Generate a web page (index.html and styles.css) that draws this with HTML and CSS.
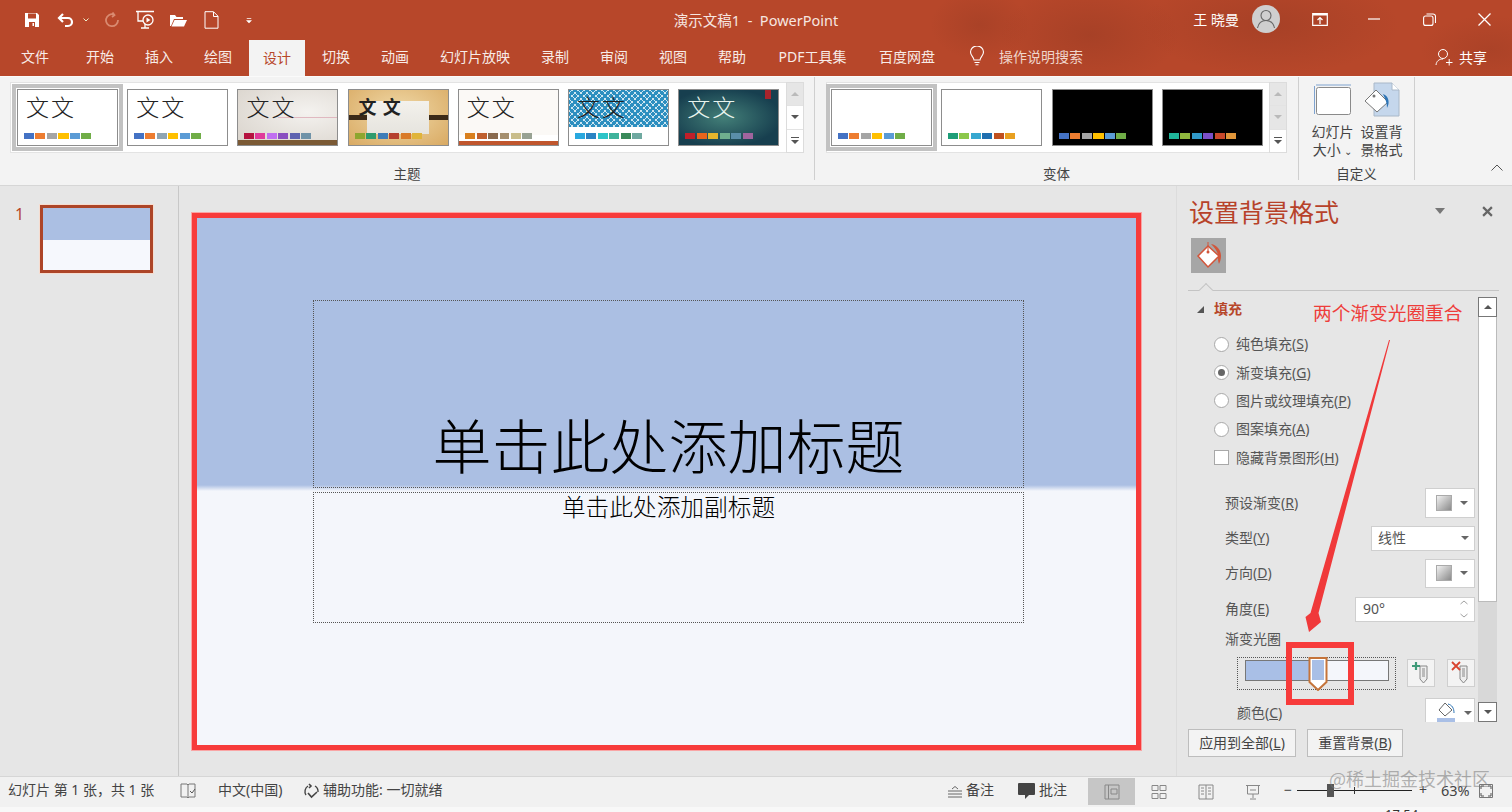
FILE: index.html
```html
<!DOCTYPE html>
<html lang="zh-CN">
<head>
  <meta charset="UTF-8">
  <title>演示文稿1 - PowerPoint</title>
  <link rel="stylesheet" href="styles.css">
</head>
<body>
  <div class="chrome">
    <div class="titlebar">
      <div class="qat">
        <svg class="qi save" viewBox="0 0 16 16"><path d="M1 1h12l2 2v12H1z" fill="#fff"/><path d="M4 1.500h8v5H4zM5 10h6v5H5z" fill="#b7472a"/><path d="M8.500 11h1.500v3H8.500z" fill="#fff"/></svg>
        <svg class="qi undo" viewBox="0 0 18 16"><path d="M6 2 2 6l4 4M2.500 6H11a4 4 0 0 1 0 8H8" fill="none" stroke="#fff" stroke-width="2.200"/></svg>
        <svg class="qi caret" viewBox="0 0 6 4"><path d="M.5.500 3 3 5.500.500" fill="none" stroke="#eec" stroke-width="1"/></svg>
        <svg class="qi redo" viewBox="0 0 16 16"><path d="M10 2.500A6 6 0 1 0 14 8M8.500 .5l2 2.500-2.500 2" fill="none" stroke="#d98a70" stroke-width="1.800"/></svg>
        <svg class="qi show" viewBox="0 0 20 20"><path d="M1 1.500h18M3 2v9h7M6 18h8M10 14v4" fill="none" stroke="#fff" stroke-width="1.300"/><circle cx="13" cy="10" r="5" fill="#b7472a" stroke="#fff" stroke-width="1.300"/><path d="M11.500 7.500 15.500 10l-4 2.500z" fill="#fff"/></svg>
        <svg class="qi open" viewBox="0 0 18 16"><path d="M1 14V3h5l1.500 2H14v2H5L2 14z" fill="#fff"/><path d="M5.500 8H18l-3 6.500H2.500z" fill="#fff"/></svg>
        <svg class="qi new" viewBox="0 0 15 18"><path d="M1 .7h8.500L14 5.200v12H1zM9.500 1v4.500H14" fill="none" stroke="#fff" stroke-width="1"/></svg>
        <svg class="qi more" viewBox="0 0 8 8"><path d="M1 .5h6v1H1zM0 3.500h8L4 7.500z" fill="#fff"/></svg>
      </div>
      <div class="doc-title">演示文稿1&nbsp; - &nbsp;PowerPoint</div>
      <div class="win">
        <span class="user">王 晓曼</span>
        <span class="avatar">
          <svg viewBox="0 0 28 28" width="28" height="28"><circle cx="14" cy="10.500" r="5" fill="none" stroke="#666" stroke-width="1.100"/><path d="M5.500 23c1-5 4-7.500 8.500-7.500s7.500 2.500 8.500 7.500" fill="none" stroke="#666" stroke-width="1.100"/></svg>
        </span>
        <svg class="wi disp" viewBox="0 0 16 13"><path d="M.7.700h14.600v11.600H.7z" fill="none" stroke="#fff" stroke-width="1.200"/><path d="M1 1.500h14" stroke="#fff" stroke-width="2"/><path d="M8 11V5M5.500 7 8 4.500 10.500 7" fill="none" stroke="#fff" stroke-width="1.200"/></svg>
        <svg class="wi min" viewBox="0 0 12 2"><path d="M0 1h12" stroke="#fff" stroke-width="1.200"/></svg>
        <svg class="wi rest" viewBox="0 0 13 13"><rect x=".6" y="3" width="9.400" height="9.400" rx="2" fill="none" stroke="#fff" stroke-width="1.100"/><path d="M3.500 1h6.500a2.500 2.500 0 0 1 2.500 2.500V10" fill="none" stroke="#fff" stroke-width="1.100"/></svg>
        <svg class="wi close" viewBox="0 0 13 13"><path d="M.5.500l12 12M12.500.500l-12 12" stroke="#fff" stroke-width="1.300"/></svg>
      </div>
    </div>
    <div class="tabs">
      <span class="tab tab-file">文件</span>
      <span class="tab">开始</span>
      <span class="tab">插入</span>
      <span class="tab">绘图</span>
      <span class="tab active">设计</span>
      <span class="tab">切换</span>
      <span class="tab">动画</span>
      <span class="tab">幻灯片放映</span>
      <span class="tab">录制</span>
      <span class="tab">审阅</span>
      <span class="tab">视图</span>
      <span class="tab">帮助</span>
      <span class="tab tab-pdf">PDF工具集</span>
      <span class="tab">百度网盘</span>
      <svg class="bulb" viewBox="0 0 16 20"><path d="M5 14c0-3-3.500-4-3.500-8a6.500 6 0 0 1 13 0c0 4-3.500 5-3.500 8zM5.500 16.500h5M6.500 18.800h3" fill="none" stroke="#fff" stroke-width="1.100"/></svg>
      <span class="search">操作说明搜索</span>
      <span class="share">
        <svg viewBox="0 0 18 18" width="18" height="18"><circle cx="8" cy="6" r="4.500" fill="none" stroke="#fff" stroke-width="1"/><path d="M1 17c.5-4 3-6 7-6M11 14.500h6.500M14.200 11v6.500" fill="none" stroke="#fff" stroke-width="1"/></svg>
        共享
      </span>
    </div>
  </div>

  <div class="ribbon">
    <section class="group group-themes">
      <div class="gallery">
        <div class="thumb selected"><b>文 文</b><i class="swatches pal-office"></i></div>
        <div class="thumb"><b>文 文</b><i class="swatches pal-2"></i></div>
        <div class="thumb th-wood"><b>文 文</b><i class="swatches pal-3"></i></div>
        <div class="thumb th-tan"><b class="bold">文 文</b><i class="swatches pal-4"></i></div>
        <div class="thumb th-strip"><b>文 文</b><i class="swatches pal-5"></i></div>
        <div class="thumb th-lattice"><b>文 文</b><i class="swatches pal-6"></i></div>
        <div class="thumb th-teal"><b>文 文</b><i class="swatches pal-7"></i></div>
        <div class="scroller">
          <span class="off"><em class="up"></em></span>
          <span><em class="down"></em></span>
          <span><em class="expand"></em></span>
        </div>
      </div>
      <div class="group-label">主题</div>
    </section>

    <section class="group group-variants">
      <div class="gallery">
        <div class="thumb selected"><i class="swatches pal-office"></i></div>
        <div class="thumb"><i class="swatches pal-8"></i></div>
        <div class="thumb th-black"><i class="swatches pal-office"></i></div>
        <div class="thumb th-black"><i class="swatches pal-9"></i></div>
        <div class="scroller">
          <span class="off"><em class="up"></em></span>
          <span class="off"><em class="down"></em></span>
          <span><em class="expand"></em></span>
        </div>
      </div>
      <div class="group-label">变体</div>
    </section>

    <section class="group group-custom">
      <div class="big-buttons">
        <div class="big">
          <svg viewBox="0 0 38 32" width="38" height="32"><rect x="2.500" y="3.500" width="34" height="27" rx="2" fill="#fff" stroke="#8a8a8a"/><path d="M2 1h35M.5 2v28" stroke="#7fa3cf" fill="none"/></svg>
          <span>幻灯片<br>大小 <small>⌄</small></span>
        </div>
        <div class="big">
          <svg viewBox="0 0 38 36" width="38" height="36"><path d="M11 1h18l7 7v26H11z" fill="#c5d7ec" stroke="#a9b8c8"/><path d="M29 1v7h7" fill="#fff" stroke="#a9b8c8"/><path d="M13 8 25 20 14 30 2 19z" fill="#fff" stroke="#777"/><path d="M20 12c6 2 7 9 4 14 0-4-1-8-4-14z" fill="#2e75b6"/><circle cx="11" cy="14" r="1.500" fill="#777"/></svg>
          <span>设置背<br>景格式</span>
        </div>
      </div>
      <div class="group-label">自定义</div>
    </section>
    <svg class="collapse" viewBox="0 0 12 7"><path d="M.5 6.500 6 1l5.500 5.500" fill="none" stroke="#555"/></svg>
  </div>

  <div class="main">
    <aside class="slides">
      <span class="num">1</span>
      <div class="mini"></div>
    </aside>

    <div class="canvas">
      <div class="slide">
        <div class="ph ph-title">单击此处添加标题</div>
        <div class="ph ph-sub">单击此处添加副标题</div>
      </div>
    </div>

    <aside class="pane">
      <div class="pane-head">
        <h2>设置背景格式</h2>
        <svg class="pane-menu" viewBox="0 0 10 6"><path d="M0 0h10L5 6z" fill="#777"/></svg>
        <svg class="pane-close" viewBox="0 0 10 10"><path d="M1 1l8 8M9 1 1 9" stroke="#666" stroke-width="2"/></svg>
      </div>
      <div class="pane-tile">
        <svg viewBox="0 0 30 30" width="30" height="30"><path d="M14 5 25 15 14 26 4 15z" fill="#fff" stroke="#d2553a" stroke-width="1.500"/><path d="M14 1v9" stroke="#d2553a"/><circle cx="14" cy="11" r="1.500" fill="#d2553a"/><path d="M17 3c6 1 10 6 10 12 0 3-1 6-2 8-1-2-1-5-1-8 0-4-3-8-7-12z" fill="#d2553a"/></svg>
      </div>
      <div class="pane-rule"></div>

      <div class="pane-body">
        <div class="form">
          <div class="section"><em></em>填充</div>
          <div class="options">
            <label class="opt"><i class="radio"></i>纯色填充(<u>S</u>)</label>
            <label class="opt"><i class="radio on"></i>渐变填充(<u>G</u>)</label>
            <label class="opt"><i class="radio"></i>图片或纹理填充(<u>P</u>)</label>
            <label class="opt"><i class="radio"></i>图案填充(<u>A</u>)</label>
            <label class="opt"><i class="check"></i>隐藏背景图形(<u>H</u>)</label>
          </div>
          <div class="row r-preset"><span>预设渐变(<u>R</u>)</span><div class="pick"><i class="grad"></i><em></em></div></div>
          <div class="row r-type"><span>类型(<u>Y</u>)</span><div class="select">线性<em></em></div></div>
          <div class="row r-dir"><span>方向(<u>D</u>)</span><div class="pick"><i class="grad"></i><em></em></div></div>
          <div class="row r-angle"><span>角度(<u>E</u>)</span>
            <div class="spin">90°
              <svg viewBox="0 0 8 18" width="8" height="18"><path d="M.5 4 4 1l3.500 3M.5 14 4 17l3.500-3" fill="none" stroke="#888" stroke-width=".8"/></svg>
            </div>
          </div>
          <div class="row r-stops"><span>渐变光圈</span></div>
          <div class="bar-row">
            <div class="stops">
              <div class="stops-bar"></div>
              <svg class="marker" viewBox="0 0 20 34" width="20" height="34"><path d="M1.500 1h17v24L10 33 1.500 25z" fill="#fff" stroke="#c5743a" stroke-width="2"/><path d="M4 3h12v20H4z" fill="#a9bfe6"/></svg>
            </div>
            <div class="stop-btn">
              <svg viewBox="0 0 20 24" width="20" height="24"><path d="M9 5h7v13l-3.500 4L9 18z" fill="#eee" stroke="#888"/><path d="M11 7h3v9h-3z" fill="#bbb"/><path d="M1 5h8M5 1v8" stroke="#3f9a78" stroke-width="2.200"/></svg>
            </div>
            <div class="stop-btn">
              <svg viewBox="0 0 20 24" width="20" height="24"><path d="M9 5h7v13l-3.500 4L9 18z" fill="#eee" stroke="#888"/><path d="M11 7h3v9h-3z" fill="#bbb"/><path d="M1 1l8 8M9 1 1 9" stroke="#d8432f" stroke-width="1.800"/></svg>
            </div>
          </div>
          <div class="row r-color"><span>颜色(<u>C</u>)</span>
            <div class="pick">
              <svg viewBox="0 0 20 24" width="20" height="24"><path d="M9 2 16 9l-7 6-6-6z" fill="#fff" stroke="#666"/><path d="M12 3c4 1 6 4 6 9" stroke="#2e75b6" fill="none"/><path d="M1 17h18v7H1z" fill="#a9bfe6"/></svg>
              <em></em>
            </div>
          </div>
        </div>
        <div class="vscroll">
          <span class="sb-btn"><em class="up"></em></span>
          <span class="sb-thumb"></span>
          <span class="sb-track"></span>
          <span class="sb-btn"><em class="down"></em></span>
        </div>
      </div>

      <div class="pane-foot">
        <button class="btn b-all">应用到全部(<u>L</u>)</button>
        <button class="btn b-reset">重置背景(<u>B</u>)</button>
      </div>
    </aside>
  </div>

  <footer class="status">
    <span class="st-count">幻灯片 第 1 张，共 1 张</span>
    <svg class="st-spell" viewBox="0 0 17 16" width="17" height="16"><path d="M1 1h6l1 1 1-1h6v13H9l-1 1-1-1H1zM8 2v12" fill="none" stroke="#777"/><path d="M10 8l2 2 3-4" fill="none" stroke="#555"/></svg>
    <span class="st-lang">中文(中国)</span>
    <svg class="st-acc" viewBox="0 0 17 17" width="17" height="17"><path d="M5 3A6.500 6.500 0 0 0 3 12M12 3a6.500 6.500 0 0 1 3 6" fill="none" stroke="#444" stroke-width="1.400"/><path d="M6 1l2 2-2 2M5 10l3.500 4L14 9" fill="none" stroke="#444" stroke-width="1.600"/></svg>
    <span class="st-acc-text">辅助功能: 一切就绪</span>

    <svg class="st-notes" viewBox="0 0 14 12" width="14" height="12"><path d="M0 5h14M0 8h14M0 11h14" stroke="#666"/><path d="M4 3 7 .5 10 3" fill="none" stroke="#666"/></svg>
    <span class="st-label">备注</span>
    <svg class="st-comment" viewBox="0 0 17 16" width="17" height="16"><path d="M1 0h15a1 1 0 0 1 1 1v10a1 1 0 0 1-1 1h-5l-4 4v-4H1a1 1 0 0 1-1-1V1a1 1 0 0 1 1-1z" fill="#444"/></svg>
    <span class="st-label">批注</span>

    <span class="view active">
      <svg viewBox="0 0 16 16" width="16" height="16"><path d="M1 1h14v14H1zM4.500 1v14M7 5h6v5H7z" fill="none" stroke="#888"/></svg>
    </span>
    <span class="view">
      <svg viewBox="0 0 16 16" width="16" height="16"><path d="M1 1.500h6v5H1zM9 1.500h6v5H9zM1 9.500h6v5H1zM9 9.500h6v5H9z" fill="none" stroke="#888"/></svg>
    </span>
    <span class="view">
      <svg viewBox="0 0 16 16" width="16" height="16"><path d="M1 1h14v14H1zM8 1v14M3 4h3M3 7h3M3 10h3M10 4h3M10 7h3M10 10h3" fill="none" stroke="#888"/></svg>
    </span>
    <span class="view">
      <svg viewBox="0 0 16 16" width="16" height="16"><path d="M1 1.500h14M2.500 2v8h11V2M8 10v4M5 15h6M5 6h6" fill="none" stroke="#888"/></svg>
    </span>

    <span class="zoom-minus">−</span>
    <span class="zoom-track"><i class="zoom-mid"></i><i class="zoom-thumb"></i></span>
    <span class="zoom-plus">+</span>
    <span class="zoom-pct">63%</span>
    <svg class="zoom-fit" viewBox="0 0 14 14" width="14" height="14"><path d="M.5.500h13v13H.5z" fill="none" stroke="#777"/><path d="M2 5V2h3M9 2h3v3M12 9v3H9M5 12H2V9" fill="none" stroke="#555"/></svg>
  </footer>

  <!-- hand annotations on top of the screenshot -->
  <div class="note-text">两个渐变光圈重合</div>
  <svg class="note-arrow" viewBox="0 0 100 310" width="100" height="310"><polygon points="90,10 18.500,283 21,292 9,302 5.500,287 10.500,283 89,10" fill="#f0393a"/></svg>
  <div class="note-box"></div>
  <div class="watermark">@稀土掘金技术社区</div>
  <div class="clock">17:54</div>
</body>
</html>
```

FILE: styles.css
```css
* {
  box-sizing: border-box;
}

html, body {
  height: 100%;
}

body {
  margin: 0;
  width: 1512px;
  height: 812px;
  position: relative;
  overflow: hidden;
  background: #e6e6e6;
  color: #444;
  font-family: "Noto Sans", "Noto Sans CJK SC", sans-serif;
  font-size: 14px;
}

i, em, b {
  font-style: normal;
  font-weight: normal;
  display: block;
}

svg {
  display: block;
  flex: none;
}

/* title bar + tabs */
.chrome {
  height: 76px;
  background-color: #b7472a;
  background-image:
    radial-gradient(ellipse 90px 50px at 1090px 35px, rgba(130, 50, 30, .3), transparent),
    radial-gradient(ellipse 130px 50px at 1270px 25px, rgba(130, 50, 30, .3), transparent),
    radial-gradient(ellipse 70px 35px at 1490px 50px, rgba(130, 50, 30, .22), transparent),
    radial-gradient(ellipse 50px 35px at 980px 25px, rgba(130, 50, 30, .25), transparent);
  color: #fff;
}

.titlebar {
  height: 38px;
  display: grid;
  grid-template-columns: 1fr auto 1fr;
  align-items: center;
}

.qat {
  display: flex;
  align-items: center;
  height: 38px;
}

.qi { margin-top: 2px; }
.save { width: 16px; height: 16px; margin-left: 24px; }
.undo { width: 18px; height: 16px; margin-left: 17px; }
.caret { width: 6px; height: 4px; margin-left: 8px; }
.redo { width: 16px; height: 16px; margin-left: 15px; }
.show { width: 20px; height: 20px; margin-left: 15px; }
.open { width: 18px; height: 16px; margin-left: 14px; }
.new { width: 15px; height: 18px; margin-left: 17px; }
.more { width: 6px; height: 7px; margin-left: 27px; }

.doc-title {
  font-size: 14.500px;
  color: #f6e6e0;
}

.win {
  display: flex;
  align-items: center;
  justify-content: flex-end;
}

.user { font-size: 14px; margin-right: 13px; }

.avatar {
  width: 28px;
  height: 28px;
  border-radius: 50%;
  background: #cfcfcf;
  margin-right: 32px;
}

.wi { flex: none; }
.disp { width: 16px; height: 13px; margin-right: 40px; }
.min { width: 12px; height: 2px; margin-right: 43px; }
.rest { width: 13px; height: 13px; margin-right: 42px; }
.close { width: 13px; height: 13px; margin-right: 21px; }

.tabs {
  height: 38px;
  display: flex;
  align-items: stretch;
  padding-left: 7px;
  font-size: 14px;
  line-height: 37px;
}

.tab {
  padding: 0 14px;
  margin-right: 3px;
  color: #f8ece8;
}

.tab-file { margin-right: 9px; }
.tab-pdf { padding: 0 15.500px; }

.tab.active {
  background: #f3f3f3;
  color: #b7472a;
  margin-top: 2px;
  line-height: 35px;
}

.bulb {
  width: 16px;
  height: 20px;
  margin: 8px 0 0 17px;
}

.search {
  margin-left: 14px;
  color: #f0d5cb;
}

.share {
  margin-left: auto;
  margin-right: 25px;
  display: flex;
  align-items: center;
  gap: 6px;
}

/* ribbon */
.ribbon {
  height: 110px;
  display: flex;
  position: relative;
  background: #f3f3f3;
  border-top: 1px solid #fafafa;
  border-bottom: 1px solid #d6d6d6;
}

.group {
  position: relative;
  border-right: 1px solid #cfcfcf;
  margin-bottom: 5px;
  padding-top: 5px;
}

.group-themes { width: 815px; padding-left: 10px; }
.group-variants { width: 484px; padding-left: 11px; }
.group-custom { width: 116px; }

.group-label {
  position: absolute;
  left: 0;
  right: 0;
  top: 88px;
  text-align: center;
  font-size: 13.500px;
  line-height: 18px;
  color: #444;
}

.gallery {
  display: inline-flex;
  height: 71px;
  align-items: center;
  padding-left: 6px;
  gap: 9.200px;
  background: #fff;
  border: 1px solid #e3e3e3;
  border-right: 0;
}

.thumb {
  width: 101px;
  height: 57px;
  position: relative;
  background: #fff;
  border: 1px solid #8d8d8d;
  overflow: hidden;
  color: #222;
}

.thumb.selected {
  overflow: visible;
  box-shadow: 0 0 0 1px #fff, 0 0 0 5px #c2c2c2;
}

.thumb b {
  font-family: "Noto Sans CJK SC", sans-serif;
  font-weight: 300;
  font-size: 23px;
  line-height: 28px;
  padding-left: 8px;
  margin-top: 2px;
  word-spacing: -3px;
  white-space: nowrap;
  position: relative;
}

.thumb b.bold {
  font-size: 18px;
  font-weight: 700;
  padding-left: 10px;
  word-spacing: 2px;
}

.swatches {
  position: absolute;
  left: 6px;
  top: 43px;
  width: 68px;
  height: 6px;
  background: linear-gradient(90deg,
    var(--a) 0 10px, #0000 0 11.500px,
    var(--b) 0 21.500px, #0000 0 23px,
    var(--c) 0 33px, #0000 0 34.500px,
    var(--d) 0 44.500px, #0000 0 46px,
    var(--e) 0 56px, #0000 0 57.500px,
    var(--f) 0 67.500px, #0000 0);
}

.pal-office { --a: #4472c4; --b: #ed7d31; --c: #a5a5a5; --d: #ffc000; --e: #5b9bd5; --f: #70ad47; }
.pal-2 { --a: #4472c4; --b: #ed7d31; --c: #8fa5b3; --d: #ffc000; --e: #5b9bd5; --f: #70ad47; }
.pal-3 { --a: #b5123f; --b: #e0399a; --c: #c06ef0; --d: #8a4fc0; --e: #5e62b0; --f: #6f93a8; }
.pal-4 { --a: #8ea62f; --b: #2e9b6e; --c: #3d7cb8; --d: #b5402e; --e: #d97a28; --f: #e0b43a; }
.pal-5 { --a: #d9801f; --b: #c0602f; --c: #8a6b4f; --d: #a58f6e; --e: #c9bd8a; --f: #98a293; }
.pal-6 { --a: #29a8df; --b: #2a84c4; --c: #2cc4c8; --d: #3fb39c; --e: #3a8a5a; --f: #6fa9a0; }
.pal-7 { --a: #c01f2a; --b: #e8641b; --c: #e5b52c; --d: #6fae8e; --e: #5a8ea8; --f: #a0649e; }
.pal-8 { --a: #1e9e78; --b: #8cc84b; --c: #37a8d0; --d: #1f6fb0; --e: #c0501f; --f: #e8a020; }
.pal-9 { --a: #1fb59a; --b: #8fb83e; --c: #3098c8; --d: #7a4fc8; --e: #c8482a; --f: #e0963a; }

.th-wood {
  background:
    linear-gradient(180deg, transparent 27px, #e0b8c0 27px 28px, transparent 28px) 40px 0 / 60px 100% no-repeat,
    linear-gradient(0deg, #7b5a35 0 5px, transparent 5px),
    radial-gradient(ellipse at 70% 40%, #f4f2ef, #d8d2ca);
}

.th-tan {
  background:
    linear-gradient(#f3f1ec, #e6e4de) 18px 11px / 62px 33px no-repeat,
    linear-gradient(#3b2a18, #3b2a18) 0 25px / 100% 5px no-repeat,
    radial-gradient(ellipse at 50% 40%, #f0d9a8, #d9aa63);
}

.th-strip {
  background: linear-gradient(0deg, #c0562d 0 4px, #fff 4px 10px, #fbf9f6 10px);
}

.th-lattice {
  background:
    linear-gradient(#fff, #fff) 0 37px / 100% 100% no-repeat,
    radial-gradient(circle at 50% 50%, transparent 6px, #cfe6f0 6px 7px, transparent 7px) 0 0 / 12px 12px,
    radial-gradient(circle at 50% 50%, transparent 6px, #cfe6f0 6px 7px, transparent 7px) 6px 6px / 12px 12px,
    #2c8fc0;
}

.th-teal {
  color: #e8f4ee;
  background:
    linear-gradient(#a8242c, #a8242c) 86px 0 / 6px 9px no-repeat,
    radial-gradient(ellipse at 45% 50%, #437f78, #173f4f 75%);
}

.th-black {
  background: #000;
}

.scroller {
  display: flex;
  flex-direction: column;
  width: 18px;
  height: 71px;
  margin-left: -2.200px;
  margin-top: -1px;
  margin-bottom: -1px;
  border: 1px solid #dcdcdc;
  background: #fff;
  flex: none;
}

.group-variants .gallery {
  gap: 9.300px;
  padding-left: 4px;
}

.group-variants .scroller { margin-left: -3px; }

.scroller span {
  flex: 1;
  display: flex;
  align-items: center;
  justify-content: center;
  border-bottom: 1px solid #e3e3e3;
}

.scroller span:last-child { border-bottom: 0; }
.scroller .off { background: #e6e6e6; }
.scroller .off em { opacity: .3; }

.up, .down {
  width: 0;
  height: 0;
  border-left: 4px solid transparent;
  border-right: 4px solid transparent;
}

.up { border-bottom: 4px solid #555; }
.down { border-top: 4px solid #555; }

.expand {
  width: 8px;
  height: 7px;
  border-top: 1px solid #555;
  position: relative;
}

.expand::after {
  content: "";
  position: absolute;
  left: 0;
  top: 2px;
  border-left: 4px solid transparent;
  border-right: 4px solid transparent;
  border-top: 4px solid #555;
}

.big-buttons {
  display: flex;
  padding-left: 9px;
}

.big {
  width: 49px;
  display: flex;
  flex-direction: column;
  align-items: center;
  font-size: 14px;
  line-height: 17.500px;
  text-align: center;
  color: #444;
}

.big svg { height: 36px; }

.big span {
  display: block;
  margin-top: 5px;
  white-space: nowrap;
}

.big small { font-size: 10px; }

.collapse {
  position: absolute;
  left: 1491px;
  top: 87px;
  width: 12px;
  height: 7px;
}

/* main area */
.main {
  height: 590px;
  display: flex;
}

.slides {
  width: 179px;
  border-right: 1px solid #c8c8c8;
  display: flex;
  align-items: flex-start;
  padding: 19px 0 0 15px;
}

.num {
  color: #b7472a;
  font-size: 16px;
  line-height: 16px;
  width: 25px;
  margin-top: 1px;
}

.mini {
  width: 113px;
  height: 68px;
  border: 3px solid #ad4528;
  box-shadow: 0 0 0 1px #f6dccf;
  background: linear-gradient(180deg, #abbfe3 0 32px, #f6f8fd 32px);
}

.canvas {
  flex: 1;
  padding: 27px 0 0 13px;
}

.slide {
  width: 949px;
  height: 537px;
  border: 5px solid #f73b3b;
  outline: 1px solid #f9a5a5;
  padding: 82px 0 0 116px;
  background: linear-gradient(180deg, #abbfe3 0 267px, #f4f6fb 273px);
}

.ph {
  width: 711px;
  border: 1px dotted #555;
  color: #000;
  text-align: center;
  font-family: "Noto Sans CJK SC", sans-serif;
  font-weight: 300;
}

.ph-title {
  height: 188px;
  font-size: 59px;
  line-height: 88px;
  padding-top: 99px;
  white-space: nowrap;
  font-weight: 300;
}

.ph-sub {
  height: 131px;
  margin-top: 4px;
  font-size: 23.700px;
  line-height: 26px;
}

/* format pane */
.pane {
  width: 336px;
  flex: none;
  display: flex;
  flex-direction: column;
  background: #e6e6e6;
  border-left: 1px solid #dcdcdc;
  color: #555;
}

.pane-head {
  display: flex;
  align-items: center;
  height: 30px;
  margin-top: 10px;
  padding-left: 12px;
}

.pane-head h2 {
  margin: 0;
  font-family: "Noto Sans CJK SC", sans-serif;
  font-weight: 400;
  font-size: 25px;
  line-height: 30px;
  color: #b7422a;
  flex: 1;
}

.pane-menu { width: 10px; height: 6px; margin-right: 37px; }
.pane-close { width: 11px; height: 11px; margin-right: 19px; }

.pane-tile {
  width: 35px;
  height: 35px;
  margin: 12px 0 0 14px;
  background: #a6a6a6;
  display: flex;
  align-items: center;
  justify-content: center;
}

.pane-rule {
  height: 1px;
  margin: 17px 13px 0 11px;
  background: #c4c4c4;
  position: relative;
}

.pane-rule::after {
  content: "";
  position: absolute;
  left: 13px;
  top: -5px;
  width: 9px;
  height: 9px;
  background: #e6e6e6;
  border-left: 1px solid #c4c4c4;
  border-top: 1px solid #c4c4c4;
  transform: rotate(45deg);
}

.pane-body {
  display: flex;
  height: 425px;
  margin-top: 6px;
}

.form {
  width: 301px;
  height: 425px;
  overflow: hidden;
  flex: none;
  font-size: 14px;
  line-height: 20px;
}

.section {
  display: flex;
  align-items: center;
  height: 20px;
  margin-top: 2px;
  padding-left: 20px;
  color: #b7472a;
  font-weight: 700;
}

.section em {
  width: 0;
  height: 0;
  margin-right: 10px;
  border-left: 7px solid transparent;
  border-bottom: 7px solid #555;
}

.options { margin-top: 11px; }

.opt {
  display: flex;
  align-items: center;
  height: 28.400px;
  padding-left: 37px;
  white-space: nowrap;
}

.radio {
  width: 15px;
  height: 15px;
  border-radius: 50%;
  background: #fff;
  border: 1px solid #a8a8a8;
  margin-right: 7px;
  position: relative;
}

.radio.on::after {
  content: "";
  position: absolute;
  left: 3px;
  top: 3px;
  width: 7px;
  height: 7px;
  border-radius: 50%;
  background: #666;
}

.check {
  width: 15px;
  height: 15px;
  background: #fff;
  border: 1px solid #a8a8a8;
  margin-right: 7px;
}

.row {
  display: flex;
  align-items: center;
  justify-content: space-between;
  padding: 0 3px 0 48px;
}

.row > span { white-space: nowrap; }

.r-preset { height: 30px; margin-top: 16px; }
.r-type { height: 25px; margin-top: 8px; }
.r-dir { height: 29px; margin-top: 8px; }
.r-angle { height: 25px; margin-top: 9px; }
.r-stops { height: 22px; margin-top: 6px; }
.r-color { height: 30px; margin-top: 8px; padding-left: 60px; }

.pick {
  width: 50px;
  height: 100%;
  background: #fff;
  border: 1px solid #cfcfcf;
  display: flex;
  align-items: center;
  padding-left: 10px;
  gap: 8px;
}

.pick .grad {
  width: 16px;
  height: 16px;
  border: 1px solid #aaa;
  background: linear-gradient(135deg, #f2f2f2, #8a8a8a);
}

.pick em, .select em {
  width: 0;
  height: 0;
  border-left: 4px solid transparent;
  border-right: 4px solid transparent;
  border-top: 4px solid #666;
}

.select {
  width: 104px;
  height: 100%;
  background: #fff;
  border: 1px solid #cfcfcf;
  display: flex;
  align-items: center;
  justify-content: space-between;
  padding: 0 5px 0 6px;
  color: #555;
}

.spin {
  width: 120px;
  height: 100%;
  background: #fff;
  border: 1px solid #cfcfcf;
  display: flex;
  align-items: center;
  justify-content: space-between;
  padding: 0 6px 0 7px;
  font-size: 14px;
}

.bar-row {
  display: flex;
  align-items: center;
  height: 33px;
  margin-top: 7px;
  padding-left: 60px;
}

.stops {
  width: 159px;
  height: 33px;
  border: 1px dotted #555;
  padding: 2px 6px 0 7px;
  position: relative;
  flex: none;
}

.stops-bar {
  height: 21px;
  border: 1px solid #777;
  background: linear-gradient(90deg, #a9bfe6 0 50%, #f4f6fb 50%);
}

.marker {
  position: absolute;
  left: 70px;
  top: -1px;
}

.stop-btn {
  width: 28px;
  height: 28px;
  margin-left: 11px;
  background: #f3f3f3;
  border: 1px solid #cfcfcf;
  display: flex;
  align-items: center;
  justify-content: center;
  flex: none;
}

.stop-btn + .stop-btn { margin-left: 12px; }

.vscroll {
  width: 19px;
  height: 425px;
  display: flex;
  flex-direction: column;
  background: #d8d8d8;
}

.sb-btn {
  height: 20px;
  flex: none;
  background: #fff;
  border: 1px solid #777;
  display: flex;
  align-items: center;
  justify-content: center;
}

.sb-thumb {
  height: 285px;
  flex: none;
  background: #fff;
  border: 1px solid #bbb;
  border-top: 0;
}

.sb-track { flex: 1; }

.pane-foot {
  display: flex;
  gap: 11px;
  padding: 7px 0 0 11px;
}

.btn {
  height: 28px;
  padding: 0;
  background: #f3f3f3;
  border: 1px solid #bdbdbd;
  color: #444;
  font: inherit;
  font-size: 14px;
  line-height: 24px;
  white-space: nowrap;
}

.b-all { width: 108px; }
.b-reset { width: 96px; }

/* status bar */
.status {
  height: 36px;
  display: flex;
  align-items: flex-start;
  padding-top: 4px;
  background: linear-gradient(180deg, #f1f1f1 0 30px, #f8f8f8 30px);
  border-top: 1px solid #d6d6d6;
  color: #444;
  font-size: 14px;
  line-height: 18px;
}

.status > span, .status > svg { flex: none; }

.st-count { margin-left: 8px; width: 150px; white-space: nowrap; }
.st-spell { margin: 2px 0 0 22px; }
.st-lang { margin-left: 21px; width: 66px; white-space: nowrap; }
.st-acc { margin: 2px 0 0 19px; }
.st-acc-text { margin-left: 3px; width: 121px; white-space: nowrap; }
.st-notes { margin: 5px 0 0 504px; }
.st-label { margin-left: 4px; width: 30px; }
.st-comment { margin: 2px 0 0 22px; }

.view {
  width: 47px;
  height: 27px;
  margin-top: -3px;
  display: flex;
  align-items: center;
  justify-content: center;
}

.st-label + .view.active { margin-left: 19px; }
.view.active { background: #c6c6c6; }

.zoom-minus { margin-left: 6px; width: 12px; text-align: center; }
.zoom-track {
  width: 115px;
  height: 1px;
  margin: 9px 0 0 3px;
  background: #222;
  position: relative;
}

.zoom-mid {
  position: absolute;
  left: 57px;
  top: -3px;
  width: 1px;
  height: 7px;
  background: #333;
}

.zoom-thumb {
  position: absolute;
  left: 30px;
  top: -6px;
  width: 7px;
  height: 13px;
  background: #555;
}

.zoom-plus { margin-left: 5px; width: 12px; text-align: center; }
.zoom-pct { margin-left: 12px; width: 34px; font-size: 14.500px; }
.zoom-fit { margin: 3px 0 0 4px; }

/* annotations lying over the window */
.note-text {
  position: absolute;
  left: 1313px;
  top: 298px;
  font-family: "Noto Sans CJK SC", sans-serif;
  font-size: 18.700px;
  line-height: 28px;
  color: #ee3d3a;
  white-space: nowrap;
}

.note-arrow {
  position: absolute;
  left: 1300px;
  top: 330px;
}

.note-box {
  position: absolute;
  left: 1286px;
  top: 642px;
  width: 68px;
  height: 63px;
  border: 6px solid #f73b3b;
}

.watermark {
  position: absolute;
  left: 1329px;
  top: 766px;
  font-family: "Noto Sans CJK SC", sans-serif;
  font-size: 18px;
  line-height: 24px;
  color: rgba(120, 120, 120, .55);
  white-space: nowrap;
}

.clock {
  position: absolute;
  left: 1385px;
  top: 806px;
  font-size: 13px;
  line-height: 16px;
  color: #333;
}
```
